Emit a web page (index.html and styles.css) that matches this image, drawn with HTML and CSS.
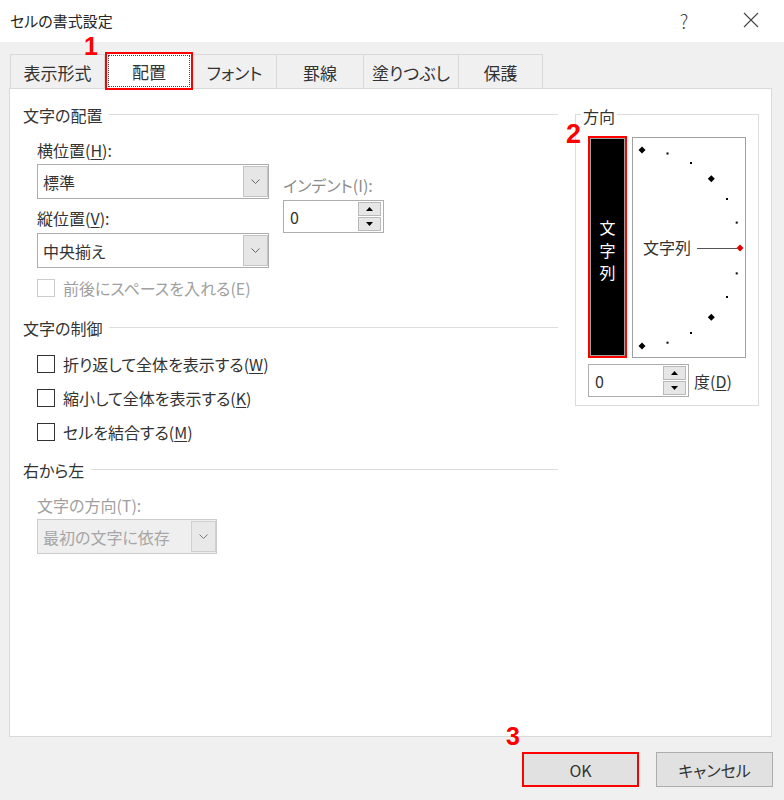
FILE: index.html
```html
<!DOCTYPE html>
<html lang="ja">
<head>
<meta charset="utf-8">
<title>セルの書式設定</title>
<link rel="stylesheet" href="styles.css">
</head>
<body>
<div class="dialog">
  <div class="titlebar">
    <span class="title">セルの書式設定</span>
    <span class="help">?</span>
    <svg class="close" width="16" height="16" viewBox="0 0 16 16"><path d="M1 1L15 15M15 1L1 15" stroke="#444" stroke-width="1.1" fill="none"/></svg>
  </div>

  <div class="tabs">
    <div class="tab first w95">表示形式</div>
    <div class="tab active"><span class="focus">配置</span><span class="mark m1">1</span></div>
    <div class="tab w84">フォント</div>
    <div class="tab w87">罫線</div>
    <div class="tab w95">塗りつぶし</div>
    <div class="tab w84">保護</div>
  </div>

  <div class="panel">
    <div class="left">
      <div class="heading">文字の配置</div>
      <div class="sub">
        <div class="align-grid">
          <div class="col-main">
            <div class="label">横位置(<u>H</u>):</div>
            <div class="combo c-first"><span class="val">標準</span><span class="drop"><svg width="9" height="5" viewBox="0 0 9 5"><path d="M0.5 0.5L4.5 4.5L8.5 0.5" stroke="#666" fill="none"/></svg></span></div>
            <div class="label l-second">縦位置(<u>V</u>):</div>
            <div class="combo c-second"><span class="val">中央揃え</span><span class="drop"><svg width="9" height="5" viewBox="0 0 9 5"><path d="M0.5 0.5L4.5 4.5L8.5 0.5" stroke="#666" fill="none"/></svg></span></div>
          </div>
          <div class="col-indent">
            <div class="label dim">インデント(I):</div>
            <div class="spin">
              <span class="val">0</span>
              <span class="spin-btns">
                <span class="sb"><svg width="7" height="4" viewBox="0 0 7 4"><path d="M0 4L3.5 0L7 4Z"/></svg></span>
                <span class="sb"><svg width="7" height="4" viewBox="0 0 7 4"><path d="M0 0L7 0L3.5 4Z"/></svg></span>
              </span>
            </div>
          </div>
        </div>
        <div class="check disabled"><span class="box"></span><span>前後にスペースを入れる(E)</span></div>
      </div>

      <div class="heading h2">文字の制御</div>
      <div class="sub checks">
        <div class="check"><span class="box"></span><span>折り返して全体を表示する(<u>W</u>)</span></div>
        <div class="check"><span class="box"></span><span>縮小して全体を表示する(<u>K</u>)</span></div>
        <div class="check"><span class="box"></span><span>セルを結合する(<u>M</u>)</span></div>
      </div>

      <div class="heading h3">右から左</div>
      <div class="sub">
        <div class="label dir-label">文字の方向(T):</div>
        <div class="combo disabled"><span class="val">最初の文字に依存</span><span class="drop"><svg width="9" height="5" viewBox="0 0 9 5"><path d="M0.5 0.5L4.5 4.5L8.5 0.5" stroke="#777" fill="none"/></svg></span></div>
      </div>
    </div>

    <fieldset class="orient">
      <legend>方向</legend>
      <div class="orient-inner">
        <div class="orient-row">
          <div class="vbox"><span>文</span><span>字</span><span>列</span><span class="mark m2">2</span></div>
          <div class="arc">
            <svg width="112" height="219" viewBox="0 0 112 219">
              <path d="M9 8.5L12.5 12L9 15.5L5.5 12Z M78.3 37.2L81.8 40.7L78.3 44.2L74.8 40.7Z M78.3 175.8L81.8 179.3L78.3 182.8L74.8 179.3Z M9 204.5L12.5 208L9 211.5L5.5 208Z" fill="#000"/>
              <g fill="#000">
                <rect x="33.5" y="14.5" width="2" height="2"/>
                <rect x="57" y="24" width="2" height="2"/>
                <rect x="93" y="60" width="2" height="2"/>
                <rect x="102.7" y="83.6" width="2" height="2"/>
                <rect x="102.7" y="134.4" width="2" height="2"/>
                <rect x="93" y="158" width="2" height="2"/>
                <rect x="57" y="194" width="2" height="2"/>
                <rect x="33.5" y="203.7" width="2" height="2"/>
              </g>
              <line x1="64" y1="110.5" x2="104" y2="110.5" stroke="#555" stroke-width="1"/>
              <path d="M107 106.5L110.5 110L107 113.5L103.5 110Z" fill="#e00000"/>
              <text x="10" y="116" class="arc-text">文字列</text>
            </svg>
          </div>
        </div>
        <div class="deg-row">
          <div class="spin">
            <span class="val">0</span>
            <span class="spin-btns">
              <span class="sb"><svg width="7" height="4" viewBox="0 0 7 4"><path d="M0 4L3.5 0L7 4Z"/></svg></span>
              <span class="sb"><svg width="7" height="4" viewBox="0 0 7 4"><path d="M0 0L7 0L3.5 4Z"/></svg></span>
            </span>
          </div>
          <span class="deg">度(<u>D</u>)</span>
        </div>
      </div>
    </fieldset>
  </div>

  <div class="buttons">
    <button class="btn ok">OK<span class="mark m3">3</span></button>
    <button class="btn">キャンセル</button>
  </div>
</div>
</body>
</html>
```

FILE: styles.css
```css
* { box-sizing: border-box; }
html, body { margin: 0; padding: 0; }
body {
  width: 784px;
  height: 800px;
  overflow: hidden;
  background: #f0f0f0;
  font-family: "Noto Sans CJK JP", "Noto Sans", sans-serif;
  font-size: 16px;
  color: #333;
  font-feature-settings: "palt";
}
u { text-decoration-thickness: 1px; text-underline-offset: 2px; }

.titlebar {
  height: 42px;
  background: #fff;
  display: flex;
  align-items: center;
  padding: 0 25px 2px 10px;
}
.title { flex: 1; font-size: 15px; color: #262626; }
.help { width: 20px; text-align: center; font-size: 19px; font-weight: 300; color: #444; margin-right: 49px; }
.close { display: block; }

.tabs {
  display: flex;
  align-items: flex-start;
  height: 34px;
  margin-top: 12px;
  padding-left: 10px;
}
.tab {
  height: 34px;
  border-top: 1px solid #d9d9d9;
  border-right: 1px solid #d9d9d9;
  display: flex;
  align-items: center;
  justify-content: center;
  padding-top: 3px;
  line-height: 20px;
  font-size: 17px;
  white-space: nowrap;
}
.tab.first { border-left: 1px solid #d9d9d9; }
.w95 { width: 95px; }
.w84 { width: 84px; }
.w87 { width: 87px; }
.tab.active {
  width: 88px;
  height: 38px;
  margin-top: -2px;
  background: #fff;
  border: 2px solid #ff0000;
  padding: 1px;
  position: relative;
  z-index: 1;
}
.focus {
  flex: 1;
  align-self: stretch;
  border: 1px dotted #444;
  display: flex;
  align-items: center;
  justify-content: center;
  padding-top: 2px;
}

.mark {
  position: absolute;
  font-family: "Liberation Sans", Arial, sans-serif;
  font-weight: bold;
  font-size: 25px;
  line-height: 25px;
  color: #ff0000;
}
.m1 { left: -23px; top: -20px; }
.m2 { left: -25px; top: -17px; font-size: 27px; }
.m3 { left: -18px; top: -30px; }

.panel {
  margin-left: 9px;
  width: 763px;
  height: 649px;
  background: #fff;
  border: 1px solid #d9d9d9;
  display: flex;
  align-items: flex-start;
}

.left { width: 535px; margin-left: 13px; margin-top: 15px; }
.heading {
  display: flex;
  align-items: center;
  height: 22px;
  line-height: 22px;
  white-space: nowrap;
}
.heading::after {
  content: "";
  flex: 1;
  height: 1px;
  background: #dcdcdc;
  margin-left: 7px;
  margin-top: -2px;
}
.h2 { margin-top: 18px; }
.h3 { margin-top: 16px; }
.sub { padding-left: 14px; }

.align-grid { display: flex; gap: 14px; margin-top: 13px; }
.col-main { width: 232px; }
.col-indent { width: 101px; padding-top: 35px; }
.col-indent .spin { margin-top: 4px; }

.label { height: 22px; line-height: 22px; white-space: nowrap; }
.label.dim { color: #8c8c8c; }
.l-second { margin-top: 8px; }

.combo {
  height: 35px;
  border: 1px solid #adadad;
  background: #fff;
  display: flex;
  align-items: center;
  margin-top: 3px;
}
.c-second { margin-top: 4px; }
.combo .val { flex: 1; padding-left: 5px; line-height: 22px; white-space: nowrap; }
.drop {
  width: 25px;
  align-self: stretch;
  margin: 1px 0;
  background: #e6e6e6;
  border: 1px solid #c4c4c4;
  display: flex;
  align-items: center;
  justify-content: center;
}
.drop svg { display: block; }
.combo.disabled {
  width: 180px;
  background: #efefef;
  border-color: #cccccc;
  color: #a6a6a6;
}
.combo.disabled .drop { border-color: #cfcfcf; background: #e8e8e8; }
.dir-label { margin-top: 13px; color: #a0a0a0; }

.spin {
  width: 101px;
  height: 33px;
  border: 1px solid #adadad;
  background: #fff;
  display: flex;
  align-items: center;
  padding-left: 6px;
}
.spin .val { flex: 1; line-height: 22px; }
.spin-btns {
  display: flex;
  flex-direction: column;
  gap: 1px;
  margin-right: 2px;
}
.sb {
  width: 23px;
  height: 14px;
  background: #e6e6e6;
  border: 1px solid #b9b9b9;
  display: flex;
  align-items: center;
  justify-content: center;
}
.sb svg { display: block; fill: #000; }

.check { display: flex; align-items: center; gap: 8px; height: 22px; line-height: 22px; white-space: nowrap; }
.box { width: 18px; height: 18px; border: 1px solid #333; background: #fff; flex: none; }
.check.disabled { color: #a0a0a0; margin-top: 9px; }
.check.disabled .box { border-color: #cccccc; }
.checks .check:first-child { margin-top: 14px; }
.checks .check + .check { margin-top: 12px; }

.orient {
  margin: 13px 0 0 17px;
  width: 184px;
  border: 1px solid #dcdcdc;
  padding: 0;
  min-width: 0;
}
.orient legend {
  margin-left: 5px;
  padding: 4px 2px 0;
  line-height: 20px;
  font-size: 16px;
}
.orient-inner { padding: 0 0 8px 12px; }
.orient-row { display: flex; align-items: flex-start; margin-top: 12px; }
.vbox {
  margin-left: 2px;
  width: 35px;
  height: 218px;
  background: #000;
  border: 1px solid #a0a0a0;
  outline: 2px solid #ff0000;
  position: relative;
  display: flex;
  flex-direction: column;
  align-items: center;
  justify-content: center;
  padding-top: 6px;
  color: #fff;
  line-height: 22.5px;
}
.arc {
  margin-left: 7px;
  margin-top: -1px;
  width: 114px;
  height: 221px;
  border: 1px solid #a0a0a0;
  background: #fff;
}
.arc svg { display: block; }
.arc-text { font-size: 16px; fill: #333; }
.deg-row { display: flex; align-items: center; gap: 5px; margin-top: 6px; }
.deg { line-height: 22px; }

.buttons {
  display: flex;
  justify-content: flex-end;
  gap: 17px;
  padding-right: 11px;
  margin-top: 15px;
}
.btn {
  width: 117px;
  height: 35px;
  padding: 0;
  background: #e1e1e1;
  border: 1px solid #adadad;
  font-family: inherit;
  font-size: 16px;
  font-feature-settings: "palt";
  color: #333;
  position: relative;
}
.btn.ok { border: 2px solid #ff0000; }
```
